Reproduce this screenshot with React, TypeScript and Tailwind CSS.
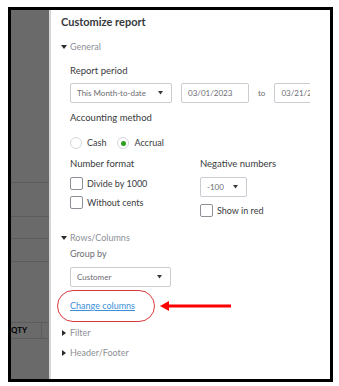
import React from "react"

const Caret = ({ open }: { open: boolean }) => (
  <svg width="6" height="6" viewBox="0 0 6 6" className="mr-[3px] shrink-0">
    {open ? <path d="M0 1 L6 1 L3 5 Z" fill="#2b2b2b" /> : <path d="M1 0 L5 3 L1 6 Z" fill="#2b2b2b" />}
  </svg>
)

const SelectBox = ({ label, w }: { label: string; w: string }) => (
  <div className={`flex h-[20px] shrink-0 items-center justify-between rounded-[2px] border border-[#c9ccd1] bg-white pl-[6px] pr-[8px] ${w}`}>
    <span className="text-[8px] text-[#6b6c72]">{label}</span>
    <svg width="5" height="4" viewBox="0 0 5 4"><path d="M0 0 L5 0 L2.5 3.5 Z" fill="#393a3d" /></svg>
  </div>
)

const Check = ({ label }: { label: string }) => (
  <div className="flex h-[13px] items-center">
    <div className="h-[13px] w-[13px] rounded-[2px] border border-[#8d9096] bg-white" />
    <span className="ml-[4px] text-[9px] leading-[13px] text-[#393a3d]">{label}</span>
  </div>
)

const Section = ({ label, open }: { label: string; open: boolean }) => (
  <div className="flex h-[14px] items-center text-[9px] text-[#8d9096]">
    <Caret open={open} />
    {label}
  </div>
)

const rows = [182, 216, 238, 261, 322, 338]

export default function App() {
  return (
    <div className="h-[386px] w-[339px] bg-white pl-[8px] pt-[7px]" style={{ fontFamily: "Lato, 'Open Sans', sans-serif" }}>
      <div className="flex h-[375px] w-[325px] border-[3px] border-black">
        <div className="relative w-[38px] shrink-0 bg-[#6a6a6a]">
          {rows.map((y) => (
            <div key={y} className="absolute left-0 right-0 h-px bg-[#5c5c5c]" style={{ top: y - 10 }} />
          ))}
          <div className="absolute left-0 top-[312px] flex h-[16px] w-[31px] items-center border-r border-[#5c5c5c] text-[8px] font-bold text-black">
            QTY
          </div>
        </div>
        <div className="w-[2px] shrink-0 bg-[#d6d6d6]" />
        <div className="flex-1 overflow-hidden pr-[20px]">
          <div className="overflow-hidden pl-[10px] pt-[5px] text-[#393a3d]">
            <div className="text-[11px] font-bold leading-[14px]">Customize report</div>
            <div className="mt-[11px]"><Section label="General" open /></div>
            <div className="pl-[9px]">
              <div className="mt-[10px] text-[9.5px] leading-[14px]">Report period</div>
              <div className="mt-[5px] flex items-center whitespace-nowrap">
                <SelectBox label="This Month-to-date" w="w-[102px]" />
                <div className="ml-[9px] flex h-[20px] w-[68px] shrink-0 items-center rounded-[2px] border border-[#c9ccd1] pl-[6px] text-[8px] text-[#6b6c72]">03/01/2023</div>
                <span className="ml-[9px] text-[8px] text-[#6b6c72]">to</span>
                <div className="ml-[9px] flex h-[20px] w-[68px] shrink-0 items-center rounded-[2px] border border-[#c9ccd1] pl-[6px] text-[8px] text-[#6b6c72]">03/21/2023</div>
              </div>
              <div className="mt-[8px] text-[9.5px] leading-[14px]">Accounting method</div>
              <div className="mt-[11px] flex h-[14px] items-center text-[9px]">
                <div className="h-[12px] w-[12px] rounded-full border border-[#d4d7dc] bg-white" />
                <span className="ml-[5px]">Cash</span>
                <div className="ml-[11px] flex h-[12px] w-[12px] items-center justify-center rounded-full border border-[#d4d7dc] bg-white">
                  <div className="h-[5px] w-[5px] rounded-full bg-[#2ca01c]" />
                </div>
                <span className="ml-[5px]">Accrual</span>
              </div>
              <div className="mt-[7px] flex">
                <div className="w-[130px]">
                  <div className="text-[9.5px] leading-[14px]">Number format</div>
                  <div className="mt-[6px]"><Check label="Divide by 1000" /></div>
                  <div className="mt-[6px]"><Check label="Without cents" /></div>
                </div>
                <div>
                  <div className="text-[9.5px] leading-[14px]">Negative numbers</div>
                  <div className="mt-[6px]"><SelectBox label="-100" w="w-[47px]" /></div>
                  <div className="mt-[7px]"><Check label="Show in red" /></div>
                </div>
              </div>
            </div>
            <div className="mt-[14px]"><Section label="Rows/Columns" open /></div>
            <div className="pl-[9px]">
              <div className="mt-[2px] text-[9px] leading-[14px] text-[#6b6c72]">Group by</div>
              <div className="mt-[6px]"><SelectBox label="Customer" w="w-[101px]" /></div>
              <div className="relative mt-[12px] h-[14px] text-[9px] leading-[14px]">
                <span className="text-[#3b8fd9] underline">Change columns</span>
                <div className="absolute left-[-13px] top-[-9px] h-[32px] w-[98px] rounded-[16px] border-[1.5px] border-[#d9393d]" />
                <svg className="absolute left-[90px] top-[1px]" width="72" height="12" viewBox="0 0 72 12">
                  <path d="M0 6 L9 1 L9 11 Z" fill="#ff0000" />
                  <rect x="8" y="4.5" width="63" height="3" fill="#ff0000" />
                </svg>
              </div>
            </div>
            <div className="mt-[13px]"><Section label="Filter" open={false} /></div>
            <div className="mt-[6px]"><Section label="Header/Footer" open={false} /></div>
          </div>
        </div>
      </div>
    </div>
  )
}
